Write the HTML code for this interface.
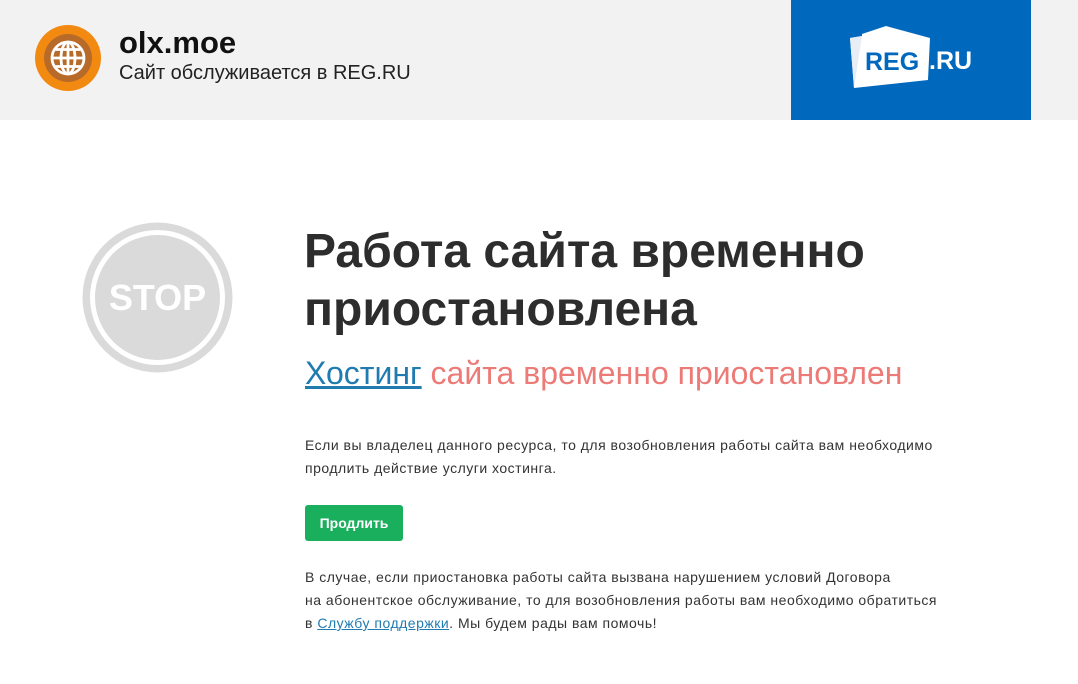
<!DOCTYPE html>
<html><head><meta charset="utf-8"><style>
*{margin:0;padding:0;box-sizing:border-box}
body{width:1078px;height:684px;background:#fff;font-family:"Liberation Sans",Arial,sans-serif;position:relative;overflow:hidden;color:#333}
.hdr{position:absolute;left:0;top:0;width:1078px;height:120px;background:#f2f2f2}
.blue{position:absolute;left:791px;top:0;width:240px;height:120px;background:#0068bd}
.abs{position:absolute;white-space:nowrap}
p.t{font-size:14px;line-height:23px;color:#333;letter-spacing:0.5px}
a{color:#1f7bb0}
</style></head><body>
<div class="hdr"></div>
<svg class="abs" style="left:34px;top:24px" width="68" height="68" viewBox="0 0 68 68">
<circle cx="34" cy="34" r="33" fill="#f28a12"/>
<circle cx="34" cy="34" r="24" fill="#b86a28"/>
<g fill="none" stroke="#fff" stroke-width="2.8">
<circle cx="34" cy="34" r="16"/>
<ellipse cx="34" cy="34" rx="7" ry="16"/>
<line x1="34" y1="18" x2="34" y2="50"/>
<line x1="18" y1="34" x2="50" y2="34"/>
<line x1="20.5" y1="25.5" x2="47.5" y2="25.5"/>
<line x1="20.5" y1="42.5" x2="47.5" y2="42.5"/>
</g></svg>
<div class="abs" style="left:119px;top:25px;font-size:31px;font-weight:bold;color:#111">olx.moe</div>
<div class="abs" style="left:119px;top:62px;font-size:20px;color:#222">Сайт обслуживается в REG.RU</div>
<div class="blue"></div>
<svg class="abs" style="left:848px;top:24px" width="132" height="66" viewBox="0 0 132 66">
<path d="M2 14 L14 12 L14 10 L38 2 L82 14 L80 56 L6 64 Z" fill="#fff"/>
<path d="M2 14 L14 12 L6 64 Z" fill="#e8eef6"/>
<text x="17" y="46" font-family="Liberation Sans,Arial,sans-serif" font-weight="bold" font-size="25" fill="#0068bd">REG</text>
<text x="81" y="45" font-family="Liberation Sans,Arial,sans-serif" font-weight="bold" font-size="25" fill="#fff">.RU</text>
</svg>
<svg class="abs" style="left:82px;top:222px" width="151" height="151" viewBox="0 0 151 151">
<circle cx="75.5" cy="75.5" r="75" fill="#dadada"/>
<circle cx="75.5" cy="75.5" r="67.5" fill="#fff"/>
<circle cx="75.5" cy="75.5" r="62.5" fill="#dadada"/>
<text x="75.5" y="88" text-anchor="middle" font-family="Liberation Sans,Arial,sans-serif" font-weight="bold" font-size="36" fill="#fff">STOP</text>
</svg>
<div class="abs" style="left:304px;top:223px;font-size:48px;line-height:58px;font-weight:bold;color:#2d2d2d">Работа сайта временно<br>приостановлена</div>
<div class="abs" style="left:305px;top:355px;font-size:32px;color:#ec7a76"><a href="#" style="color:#1f7bb0">Хостинг</a> сайта временно приостановлен</div>
<p class="t abs" style="left:305px;top:434px">Если вы владелец данного ресурса, то для возобновления работы сайта вам необходимо<br>продлить действие услуги хостинга.</p>
<div class="abs" style="left:305px;top:505px;width:98px;height:36px;background:#1aaf5d;border-radius:3px;color:#fff;font-weight:bold;font-size:14px;line-height:36px;text-align:center">Продлить</div>
<p class="t abs" style="left:305px;top:566px">В случае, если приостановка работы сайта вызвана нарушением условий Договора<br>на абонентское обслуживание, то для возобновления работы вам необходимо обратиться<br>в <a href="#">Службу поддержки</a>. Мы будем рады вам помочь!</p>
</body></html>
